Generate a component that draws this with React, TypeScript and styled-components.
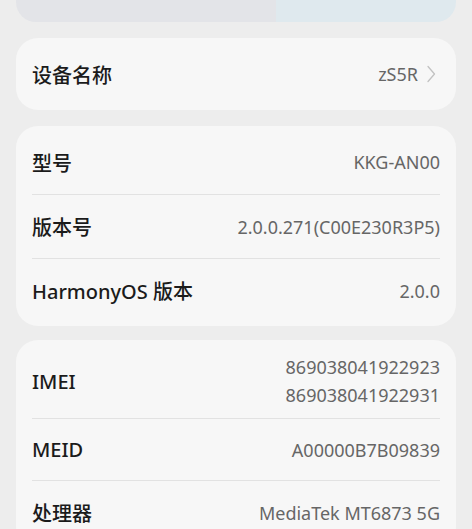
import React from 'react';
import styled, { createGlobalStyle } from 'styled-components';

const GlobalStyle = createGlobalStyle`
  html, body {
    margin: 0;
    padding: 0;
    background: #ededed;
    font-family: "Noto Sans", "Noto Sans CJK SC", sans-serif;
  }
`;

const Page = styled.div`
  width: 472px;
  height: 529px;
  overflow: hidden;
  padding: 0 16px;
  box-sizing: border-box;
  display: flex;
  flex-direction: column;
  gap: 16px;
`;

const Banner = styled.div`
  height: 22px;
  flex-shrink: 0;
  display: flex;
  border-radius: 0 0 20px 20px;
  overflow: hidden;
`;

const BannerHalf = styled.div<{ $tint: string; $grow: number }>`
  flex: ${p => p.$grow};
  background: ${p => p.$tint};
`;

const Card = styled.div<{ $gapAfter?: number }>`
  flex-shrink: 0;
  background: #f7f7f7;
  border-radius: 22px;
  padding: 4px 16px;
  margin-bottom: ${p => (p.$gapAfter ?? 0)}px;
`;

const Row = styled.div<{ $height?: number }>`
  min-height: ${p => p.$height ?? 64}px;
  display: flex;
  align-items: center;
  justify-content: space-between;
  box-sizing: border-box;
  & + & {
    border-top: 1px solid #e2e2e2;
  }
`;

const Label = styled.span`
  font-size: 20px;
  font-weight: 500;
  color: #1b1b1b;
  white-space: nowrap;
`;

const Value = styled.span`
  display: flex;
  flex-direction: column;
  align-items: flex-end;
  font-size: 18px;
  line-height: 28px;
  color: #666666;
  white-space: nowrap;
`;

const Link = styled.span`
  display: flex;
  align-items: center;
  gap: 9px;
  font-size: 18px;
  color: #666666;
  padding-right: 4px;
`;

const Chevron = () => (
  <svg width="9" height="18" viewBox="0 0 9 18" fill="none">
    <path d="M1 1.5L7.5 9L1 16.5" stroke="#c2c2c2" strokeWidth="1.3" strokeLinecap="round" strokeLinejoin="round" />
  </svg>
);

const App: React.FC = () => (
  <>
    <GlobalStyle />
    <Page>
      <Banner>
        <BannerHalf $tint="#e3e4e8" $grow={260} />
        <BannerHalf $tint="#dfe9ee" $grow={180} />
      </Banner>

      <Card>
        <Row>
          <Label>设备名称</Label>
          <Link>
            zS5R
            <Chevron />
          </Link>
        </Row>
      </Card>

      <Card $gapAfter={-2}>
        <Row>
          <Label>型号</Label>
          <Value>KKG-AN00</Value>
        </Row>
        <Row>
          <Label>版本号</Label>
          <Value>2.0.0.271(C00E230R3P5)</Value>
        </Row>
        <Row>
          <Label>HarmonyOS 版本</Label>
          <Value>2.0.0</Value>
        </Row>
      </Card>

      <Card>
        <Row $height={74}>
          <Label>IMEI</Label>
          <Value>
            <span>869038041922923</span>
            <span>869038041922931</span>
          </Value>
        </Row>
        <Row $height={62}>
          <Label>MEID</Label>
          <Value>A00000B7B09839</Value>
        </Row>
        <Row>
          <Label>处理器</Label>
          <Value>MediaTek MT6873 5G</Value>
        </Row>
      </Card>
    </Page>
  </>
);

export default App;
